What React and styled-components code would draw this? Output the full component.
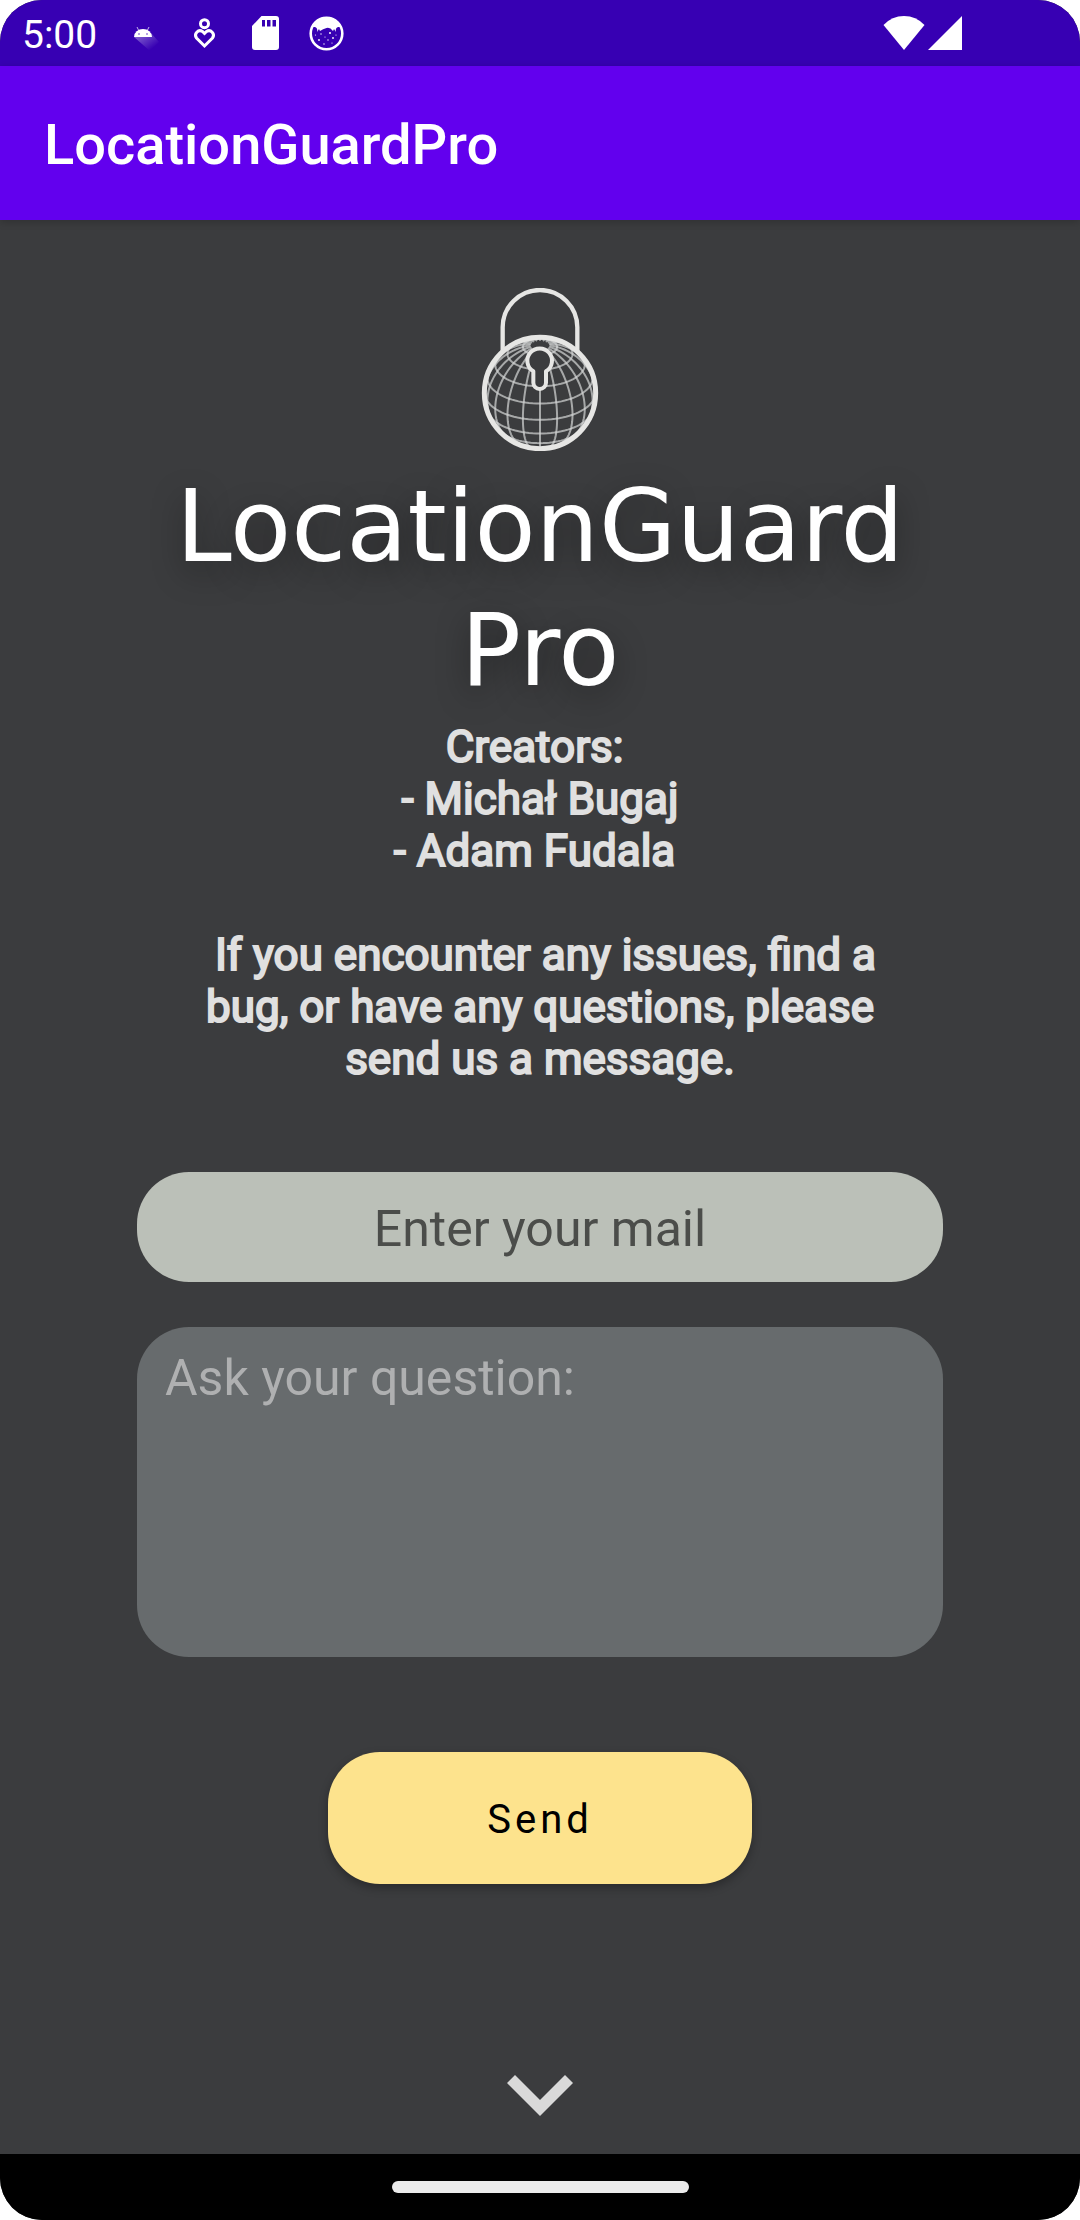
import React from "react";
import styled, { createGlobalStyle } from "styled-components";

const GlobalStyle = createGlobalStyle`
  *, *::before, *::after { box-sizing: border-box; }
  body {
    margin: 0;
    background: #ffffff;
    font-family: Roboto, "Noto Sans", sans-serif;
  }
`;

const Screen = styled.div`
  display: flex;
  flex-direction: column;
  min-height: 100vh;
  border-radius: 42px;
  overflow: hidden;
  background: #3b3c3e;
`;

const StatusBar = styled.header`
  display: flex;
  align-items: center;
  justify-content: space-between;
  height: 66px;
  padding: 0 118px 0 22px;
  background: #3700b3;
  color: #ffffff;
`;

const StatusGroup = styled.div`
  display: flex;
  align-items: center;
  gap: ${(p) => p.$gap}px;
`;

const Clock = styled.time`
  width: 82px;
  padding-top: 4px;
  font-size: 39px;
  line-height: 46px;
`;

const AppBar = styled.div`
  position: relative;
  display: flex;
  align-items: center;
  height: 154px;
  padding: 4px 44px 0;
  background: #6200ee;
  box-shadow: 0 2px 8px rgba(0, 0, 0, 0.2);
`;

const AppName = styled.span`
  color: #ffffff;
  font-size: 56px;
  font-weight: 500;
  line-height: 66px;
`;

const Content = styled.main`
  flex: 1;
  display: flex;
  flex-direction: column;
  align-items: center;
  padding: 68px 137px 38px;
`;

const Title = styled.h1`
  margin: 14px 0 8px;
  color: #ffffff;
  font-family: "DejaVu Sans", sans-serif;
  font-size: 100px;
  font-weight: 400;
  line-height: 124px;
  text-align: center;
  text-shadow: 0 10px 32px rgba(0, 0, 0, 0.4);
`;

const Info = styled.section`
  display: flex;
  flex-direction: column;
  gap: 52px;
  padding: 0 48px;
  color: #e0e0e0;
  font-size: 44px;
  line-height: 52px;
  text-align: center;
  -webkit-text-stroke: 2px #e0e0e0;
`;

const Paragraph = styled.p`
  margin: 0;
`;

const Form = styled.form`
  display: flex;
  flex-direction: column;
  align-items: center;
  width: 100%;
  margin-top: 87px;
`;

const MailField = styled.input`
  width: 100%;
  height: 110px;
  padding: 4px 28px 0;
  border: 0;
  border-radius: 52px;
  outline: 0;
  background: #bbc0b8;
  color: #20211f;
  font: 400 50px/58px Roboto, "Noto Sans", sans-serif;
  text-align: center;

  &::placeholder {
    color: #4b4d4a;
    opacity: 1;
  }
`;

const QuestionField = styled.textarea`
  display: block;
  width: 100%;
  height: 330px;
  margin: 45px 0 95px;
  padding: 22px 28px;
  border: 0;
  border-radius: 52px;
  outline: 0;
  resize: none;
  background: #676b6d;
  color: #ffffff;
  font: 400 50px/58px Roboto, "Noto Sans", sans-serif;

  &::placeholder {
    color: #afb0b1;
    opacity: 1;
  }
`;

const SendButton = styled.button`
  width: 424px;
  height: 132px;
  padding: 4px 28px 0;
  border: 0;
  border-radius: 52px;
  background: #fde38d;
  box-shadow: 0 4px 10px rgba(0, 0, 0, 0.3);
  color: #000000;
  font: 400 40px/46px Roboto, "Noto Sans", sans-serif;
  letter-spacing: 4px;
  cursor: pointer;
`;

const CollapseButton = styled.button`
  display: flex;
  margin-top: auto;
  padding: 0;
  border: 0;
  background: none;
  cursor: pointer;
`;

const NavBar = styled.footer`
  display: flex;
  align-items: center;
  justify-content: center;
  height: 66px;
  background: #000000;
`;

const HomeHandle = styled.span`
  width: 297px;
  height: 12px;
  border-radius: 6px;
  background: #ebebeb;
`;

// Wire-frame globe tilted toward the viewer; only the visible half is drawn.
const TILT = (61 * Math.PI) / 180;
const rad = (deg) => (deg * Math.PI) / 180;

function project(theta, phi) {
  const depth =
    Math.cos(theta) * Math.cos(TILT) +
    Math.sin(theta) * Math.cos(phi) * Math.sin(TILT);
  const x = Math.sin(theta) * Math.sin(phi);
  const y =
    -Math.cos(theta) * Math.sin(TILT) +
    Math.sin(theta) * Math.cos(phi) * Math.cos(TILT);
  return { x: 177 + x * 166, y: 315 + y * 166, visible: depth > 0 };
}

function trace(points) {
  let d = "";
  let pen = false;
  points.forEach((p) => {
    if (p.visible) {
      d += `${pen ? "L" : "M"}${p.x.toFixed(1)} ${p.y.toFixed(1)}`;
    }
    pen = p.visible;
  });
  return d;
}

const range = (from, to, step) => {
  const out = [];
  for (let v = from; v <= to; v += step) out.push(v);
  return out;
};

const parallels = range(18, 144, 18).map((t) =>
  trace(range(-180, 180, 4).map((f) => project(rad(t), rad(f))))
);
const meridians = range(-180, 162, 18).map((f) =>
  trace(range(10, 178, 4).map((t) => project(rad(t), rad(f))))
);

const PadlockLogo = () => (
  <svg width="118" height="163" viewBox="0 0 354 489" fill="none" role="img" aria-label="Padlock">
    <g stroke="#d4d5d5" strokeOpacity="0.7" strokeWidth="6">
      {[...parallels, ...meridians].map((d, i) => (
        <path key={i} d={d} />
      ))}
    </g>
    <g stroke="#e6e6e4">
      <path d="M65 192V118a112 112 0 0 1 224 0v74" strokeWidth="13" />
      <circle cx="177" cy="315" r="167" strokeWidth="15" />
      <path
        d="M157 250a37 37 0 1 1 38 0v34a19 19 0 0 1-38 0z"
        fill="#3b3c3e"
        strokeWidth="12"
        strokeLinejoin="round"
      />
    </g>
  </svg>
);

const AndroidIcon = () => (
  <svg width="44" height="44" viewBox="0 0 44 44">
    <defs>
      <linearGradient id="cast" x1="0" y1="0" x2="1" y2="1">
        <stop offset="0" stopColor="#fff" stopOpacity="0.45" />
        <stop offset="0.8" stopColor="#fff" stopOpacity="0" />
      </linearGradient>
    </defs>
    <path d="M13 26L29 40L38 31L30 22z" fill="url(#cast)" />
    <path d="M13 26a9 8 0 0 1 18 0z" fill="#fff" />
    <path d="M16 16l2 4M28 16l-2 4" stroke="#fff" strokeOpacity="0.7" strokeWidth="1" />
    <circle cx="18" cy="23" r="0.700" fill="#3700b3" />
    <circle cx="26" cy="23" r="0.700" fill="#3700b3" />
  </svg>
);

const WellbeingIcon = () => (
  <svg width="44" height="44" viewBox="0 0 44 44" fill="none" stroke="#fff" strokeWidth="3">
    <circle cx="22.500" cy="12.700" r="4" />
    <path d="M22.500 35l-8-8a4.500 4.500 0 0 1 6-6.500l2 2 2-2a4.500 4.500 0 0 1 6 6.500z" />
  </svg>
);

const SdCardIcon = () => (
  <svg width="44" height="44" viewBox="0 0 44 44">
    <path d="M18.500 5h14.500a3 3 0 0 1 3 3v28a3 3 0 0 1-3 3h-21a3 3 0 0 1-3-3V15z" fill="#fff" />
    <path d="M19 9h3v6.500h-3zM24 9h3.500v6.500h-3.500zM29.500 9h3.500v6.500h-3.500z" fill="#3700b3" />
  </svg>
);

const CatIcon = () => (
  <svg width="44" height="44" viewBox="0 0 44 44">
    <circle cx="22.500" cy="22.500" r="15.800" fill="none" stroke="#fff" strokeWidth="2.600" />
    <path
      d="M8 16C11 9 16 6 22.500 6s11.500 3 14.500 10l-3 0q-3 1-2 5l-2-3-1 2q-3-4-6.500-3t-6.500 3l-1-2-2 3q1-4-2-5z"
      fill="#fff"
    />
    <g fill="#fff">
      <circle cx="11.500" cy="24" r="0.600" />
      <circle cx="17" cy="23" r="0.700" />
      <circle cx="26" cy="22" r="1" />
      <circle cx="32" cy="24" r="0.600" />
      <circle cx="21" cy="26" r="0.600" />
      <circle cx="15" cy="29" r="0.900" />
      <circle cx="24" cy="29" r="0.700" />
      <circle cx="29" cy="27" r="0.900" />
      <circle cx="20" cy="33" r="0.700" />
      <circle cx="28" cy="32" r="0.600" />
    </g>
  </svg>
);

const WifiIcon = () => (
  <svg width="42" height="36" viewBox="0 0 42 36">
    <path d="M0.500 10Q9 1 21 1t20.500 9L21 35z" fill="#fff" />
  </svg>
);

const SignalIcon = () => (
  <svg width="34" height="36" viewBox="0 0 34 36">
    <path d="M34 1v34H0z" fill="#fff" />
  </svg>
);

const ChevronIcon = () => (
  <svg width="66" height="42" viewBox="0 0 66 42">
    <path d="M8 1L33 26L58 1L66 9L33 42L0 9z" fill="#d9d9d9" />
  </svg>
);

export default function App() {
  return (
    <>
      <GlobalStyle />
      <Screen>
        <StatusBar>
          <StatusGroup $gap={17}>
            <Clock>5:00</Clock>
            <AndroidIcon />
            <WellbeingIcon />
            <SdCardIcon />
            <CatIcon />
          </StatusGroup>
          <StatusGroup $gap={3}>
            <WifiIcon />
            <SignalIcon />
          </StatusGroup>
        </StatusBar>
        <AppBar>
          <AppName>LocationGuardPro</AppName>
        </AppBar>
        <Content>
          <PadlockLogo />
          <Title>LocationGuard Pro</Title>
          <Info>
            <Paragraph>
              Creators:&nbsp;
              <br />- Michał Bugaj
              <br />- Adam Fudala&nbsp;
            </Paragraph>
            <Paragraph>
              &nbsp;If you encounter any issues, find a bug, or have any
              questions, please send us a message.
            </Paragraph>
          </Info>
          <Form onSubmit={(event) => event.preventDefault()}>
            <MailField
              type="email"
              name="mail"
              aria-label="Enter your mail"
              placeholder="Enter your mail"
            />
            <QuestionField
              name="question"
              aria-label="Ask your question:"
              placeholder="Ask your question:"
            />
            <SendButton type="submit">Send</SendButton>
          </Form>
          <CollapseButton type="button" aria-label="Close">
            <ChevronIcon />
          </CollapseButton>
        </Content>
        <NavBar>
          <HomeHandle />
        </NavBar>
      </Screen>
    </>
  );
}
